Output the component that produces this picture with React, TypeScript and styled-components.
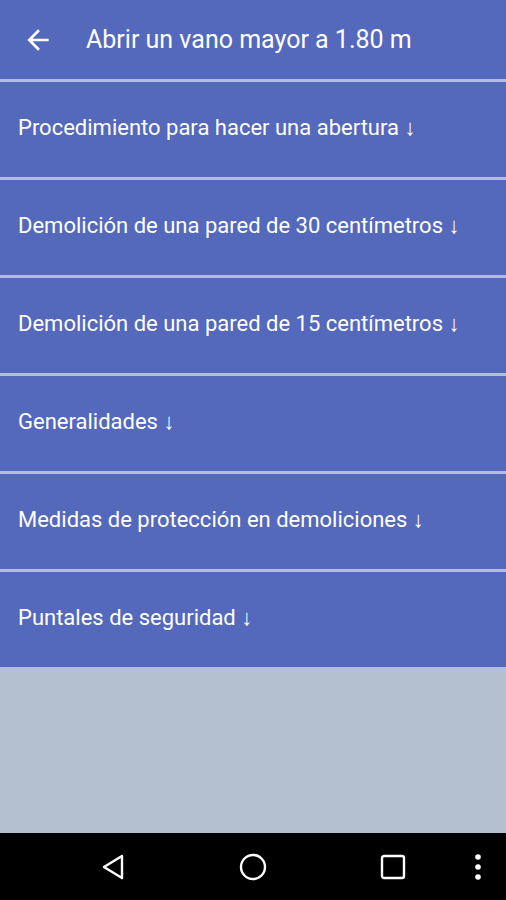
import React from "react";
import styled, { createGlobalStyle } from "styled-components";

const Global = createGlobalStyle`
  html, body { margin: 0; padding: 0; }
  body { font-family: Roboto, "Noto Sans", sans-serif; background: #b4c0cf; }
`;

const Screen = styled.div`
  width: 506px;
  height: 900px;
  display: flex;
  flex-direction: column;
  background: #b4c0cf;
  overflow: hidden;
`;

const Toolbar = styled.header`
  height: 79px;
  flex: none;
  display: flex;
  align-items: center;
  background: #5468bc;
  color: #fff;
`;

const BackButton = styled.div`
  width: 32px;
  height: 32px;
  margin-left: 22px;
  margin-right: 32px;
  display: flex;
  align-items: center;
  justify-content: center;
`;

const Title = styled.h1`
  margin: 0;
  font-size: 25px;
  font-weight: 400;
`;

const List = styled.div`
  display: flex;
  flex-direction: column;
  flex: none;
`;

const Separator = styled.div`
  height: 3px;
  background: #b4bfd5;
`;

const Row = styled.div`
  height: 95px;
  display: flex;
  align-items: center;
  padding-left: 18px;
  padding-bottom: 3px;
  box-sizing: border-box;
  background: #5468bc;
  color: #fff;
  font-size: 22px;
`;

const Filler = styled.div`
  flex: 1;
  background: #b4c0cf;
`;

const NavBar = styled.nav`
  height: 67px;
  flex: none;
  background: #000;
  position: relative;
`;

const NavIcon = styled.div<{ $x: number }>`
  position: absolute;
  left: ${(p) => p.$x}px;
  top: 50%;
  transform: translate(-50%, -50%);
  display: flex;
`;

const items = [
  "Procedimiento para hacer una abertura ↓",
  "Demolición de una pared de 30 centímetros ↓",
  "Demolición de una pared de 15 centímetros ↓",
  "Generalidades ↓",
  "Medidas de protección en demoliciones ↓",
  "Puntales de seguridad ↓",
];

export default function App() {
  return (
    <>
      <Global />
      <Screen>
        <Toolbar>
          <BackButton>
            <svg width="32" height="32" viewBox="0 0 24 24">
              <path
                d="M20 11H7.83l5.59-5.59L12 4l-8 8 8 8 1.41-1.41L7.83 13H20v-2z"
                fill="#fff"
              />
            </svg>
          </BackButton>
          <Title>Abrir un vano mayor a 1.80 m</Title>
        </Toolbar>
        <List>
          {items.map((t) => (
            <React.Fragment key={t}>
              <Separator />
              <Row>{t}</Row>
            </React.Fragment>
          ))}
        </List>
        <Filler />
        <NavBar>
          <NavIcon $x={113}>
            <svg width="26" height="28" viewBox="0 0 26 28">
              <path d="M22 3 L4 14 L22 25 Z" fill="none" stroke="#fff" strokeWidth="2.4" strokeLinejoin="round" />
            </svg>
          </NavIcon>
          <NavIcon $x={253}>
            <svg width="28" height="28" viewBox="0 0 28 28">
              <circle cx="14" cy="14" r="12" fill="none" stroke="#fff" strokeWidth="2.4" />
            </svg>
          </NavIcon>
          <NavIcon $x={393}>
            <svg width="26" height="26" viewBox="0 0 26 26">
              <rect x="2" y="2" width="22" height="22" rx="2" fill="none" stroke="#fff" strokeWidth="2.4" />
            </svg>
          </NavIcon>
          <NavIcon $x={478}>
            <svg width="8" height="28" viewBox="0 0 8 28">
              <circle cx="4" cy="4" r="2.8" fill="#fff" />
              <circle cx="4" cy="14" r="2.8" fill="#fff" />
              <circle cx="4" cy="24" r="2.8" fill="#fff" />
            </svg>
          </NavIcon>
        </NavBar>
      </Screen>
    </>
  );
}
